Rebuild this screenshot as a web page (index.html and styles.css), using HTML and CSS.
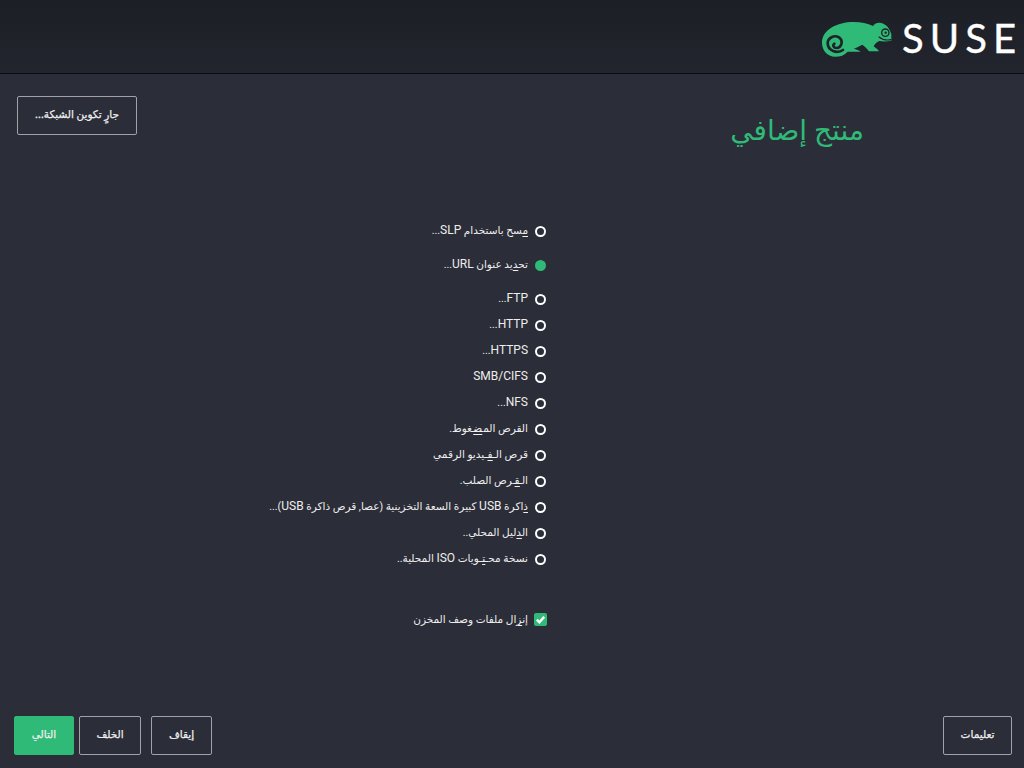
FILE: index.html
```html
<!DOCTYPE html>
<html lang="ar" dir="rtl">
<head><meta charset="utf-8"><title>منتج إضافي</title><link rel="stylesheet" href="styles.css"></head>
<body>
<header class="banner">
  <div class="logo" dir="ltr">
    <svg class="mark" viewBox="55 68 210 105" width="70" height="35"><path fill="#30ba78" d="M95 172C70 172 55 152 55 130C55 92 100 68 150 68C172 68 192 72 208 80C214 72 222 69 232 71C248 74 258 88 263 104L263 124C250 127 238 127 226 125C218 130 212 135 210 141C216 146 222 149 226 156L196 156C190 148 184 142 176 136C168 140 158 145 150 148C158 150 166 152 171 157L132 157C122 168 110 172 95 172Z"/><path fill="none" stroke="#1f2229" stroke-width="8" stroke-linecap="round" d="M118 152C100 164 72 154 72 132C72 115 92 106 106 114C120 124 114 146 98 146C90 146 86 138 92 133"/><path fill="none" stroke="#1f2229" stroke-width="3.5" stroke-linecap="round" d="M226 113C236 122 250 123 262 121"/><circle cx="245" cy="100" r="11" fill="none" stroke="#1f2229" stroke-width="4"/><circle cx="246" cy="100" r="3.5" fill="#1f2229"/></svg>
    <span class="word">SUSE</span>
  </div>
</header>
<main class="content">
  <div class="title-row">
    <h1 class="title">منتج إضافي</h1>
    <button class="btn net">جارٍ تكوين الشبكة...</button>
  </div>
  <div class="form">
    <label class="opt"><span class="radio"></span><span><u>م</u>سح باستخدام <span class="lat">SLP</span>...</span></label>
    <label class="opt second"><span class="radio on"></span><span>تح<u>د</u>يد عنوان <span class="lat">URL</span>...</span></label>
    <div class="group">
      <label class="opt"><span class="radio"></span><span><span class="lat">FTP</span>...</span></label>
      <label class="opt"><span class="radio"></span><span><span class="lat">HTTP</span>...</span></label>
      <label class="opt"><span class="radio"></span><span><span class="lat">HTTPS</span>...</span></label>
      <label class="opt"><span class="radio"></span><span><span class="lat">SMB/CIFS</span></span></label>
      <label class="opt"><span class="radio"></span><span><span class="lat">NFS</span>...</span></label>
      <label class="opt"><span class="radio"></span><span class="low">القرص الم<u class="w1">ض</u>غوط.</span></label>
      <label class="opt"><span class="radio"></span><span class="low">قرص ال<u class="w3">ف</u>يديو الرقمي</span></label>
      <label class="opt"><span class="radio"></span><span class="low">ال<u class="w2">ق</u>رص الصلب.</span></label>
      <label class="opt"><span class="radio"></span><span><u>ذ</u>اكرة <span class="lat">USB</span> كبيرة السعة التخزينية (عصا, قرص ذاكرة <span class="lat">USB</span>)...</span></label>
      <label class="opt"><span class="radio"></span><span class="low">ال<u>د</u>ليل المحلي..</span></label>
      <label class="opt"><span class="radio"></span><span>نسخة مح<u class="w3">ت</u>ويات <span class="lat">ISO</span> المحلية..</span></label>
    </div>
    <label class="opt check-row"><span class="check"><svg viewBox="0 0 13 13" width="13" height="13"><path d="M2.8 6.6l2.6 2.7L10.2 3.9" fill="none" stroke="#fff" stroke-width="2.4"/></svg></span><span class="low">إن<u>ز</u>ال ملفات وصف المخزن</span></label>
  </div>
</main>
<footer class="actions">
  <button class="btn help">تعليمات</button>
  <div class="right">
    <button class="btn abort">إيقاف</button>
    <button class="btn back">الخلف</button>
    <button class="btn next">التالي</button>
  </div>
</footer>
</body>
</html>
```
FILE: styles.css
```css
* { box-sizing: border-box; }
html, body { margin: 0; height: 100%; }
body { width: 1024px; height: 768px; overflow: hidden; display: flex; flex-direction: column; background: #2b2d38; color: #eeeeee; font-family: Roboto, "DejaVu Sans", sans-serif; font-size: 10.5px; }
u { text-decoration-thickness: 1px; text-underline-offset: 2px; }
.w1, .w2, .w3 { background: linear-gradient(currentColor, currentColor) no-repeat 0 76% / 100% 1px; }
.w1 { padding: 0 1px; }
.w2 { padding: 0 2px; }
.w3 { padding: 0 3px; }
.lat { font-size: 12px; }
.low { position: relative; top: 1px; }
.banner { height: 74px; flex: none; background: linear-gradient(#1c1f26, #22252d); border-bottom: 1px solid #0c0d10; display: flex; justify-content: flex-end; direction: ltr; align-items: center; }
.logo { display: flex; align-items: center; margin-right: 8px; gap: 10px; }
.mark { display: block; margin-top: 5px; }
.word { font-family: Lato, sans-serif; font-size: 40px; letter-spacing: 6px; margin: 2px -6px 0 0; color: #fff; font-weight: 400; line-height: 1; -webkit-text-stroke: 0.4px #fff; }
.content { flex: 1; display: flex; flex-direction: column; position: relative; }
.title-row { height: 61px; margin-top: 22px; display: flex; justify-content: space-between; padding: 0 160px 0 17px; flex: none; }
.title { margin: 15px 0 0; font-size: 28px; font-weight: 400; color: #30ba78; line-height: 40px; }
.btn { font-family: inherit; font-size: 10.5px; font-weight: 500; color: #eeeeee; background: transparent; border: 1px solid #a0a2a8; border-radius: 2px; height: 39px; padding: 0 0 2px; white-space: nowrap; -webkit-text-stroke: 0.25px #eeeeee; }
.net { width: 120px; }
.form { margin-top: 60px; padding-right: 477px; display: flex; flex-direction: column; align-items: flex-start; }
.opt { display: flex; align-items: center; gap: 7px; height: 26px; line-height: 24px; white-space: nowrap; }
.opt > .radio { margin-top: 2px; }
.second { margin-top: 8px; }
.group { margin-top: 8px; display: flex; flex-direction: column; }
.radio { width: 11px; height: 11px; border: 2px solid #fff; border-radius: 50%; flex: none; margin-right: 1px; }
.radio.on { background: #30ba78; border-color: #30ba78; }
.check-row { margin-top: 35px; gap: 6px; }
.check { width: 13px; height: 13px; background: #30ba78; border-radius: 2px; flex: none; display: flex; margin-top: 1px; }
.actions { height: 52px; flex: none; display: flex; justify-content: space-between; padding: 0 12px 13px 14px; align-items: flex-start; }
.right { display: flex; gap: 5px; }
.help { width: 69px; }
.abort { width: 61px; margin-left: 5px; }
.back { width: 62px; }
.next { width: 60px; background: #30ba78; border-color: #30ba78; }
```
